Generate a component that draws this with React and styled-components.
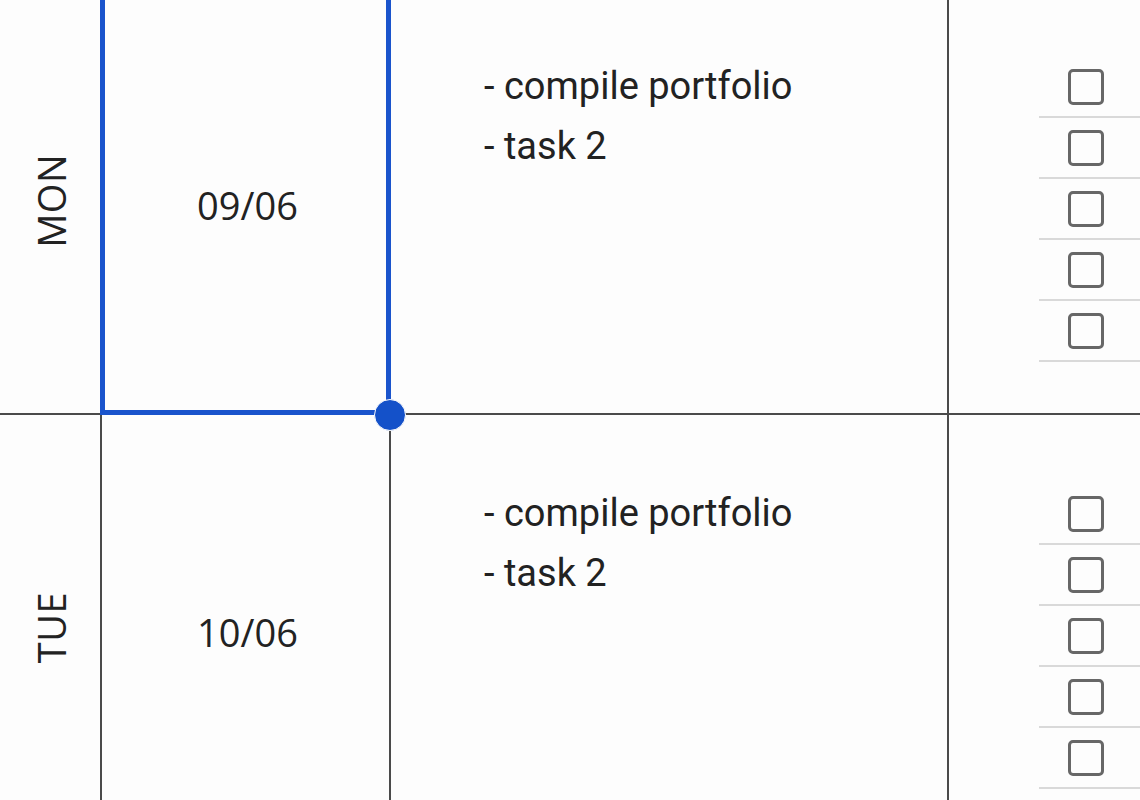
import React from "react";
import styled, { createGlobalStyle } from "styled-components";

const GlobalStyle = createGlobalStyle`
  html, body {
    margin: 0;
    padding: 0;
    background: #fdfdfd;
  }
`;

const Viewport = styled.div`
  width: 1140px;
  height: 800px;
  overflow: hidden;
  background: #fdfdfd;
`;

const Grid = styled.div`
  display: grid;
  grid-template-columns: 102px 289px 558px 260px;
  grid-auto-rows: 427px;
  margin-top: -12px;
  color: #222;
`;

const Cell = styled.div`
  box-sizing: border-box;
  position: relative;
  border-right: 2px solid #4a4a4a;
  border-bottom: 2px solid #4a4a4a;
`;

const DayCell = styled(Cell)`
  display: flex;
  align-items: center;
  justify-content: center;
`;

const DayLabel = styled.span`
  writing-mode: vertical-rl;
  transform: rotate(180deg);
  font-family: "Open Sans", "Liberation Sans", sans-serif;
  font-size: 38px;
  letter-spacing: 0.5px;
  margin-left: 2px;
`;

const DateCell = styled(Cell)`
  display: flex;
  align-items: center;
  justify-content: center;
  padding: 8px 0 0 4px;
  font-family: "Open Sans", "Liberation Sans", sans-serif;
  font-size: 38px;
`;

const Selection = styled.div`
  position: absolute;
  top: -2px;
  left: -2px;
  right: -2px;
  bottom: -2px;
  border: 5px solid #1a54cc;
  pointer-events: none;
`;

const FillHandle = styled.div`
  position: absolute;
  right: -17px;
  bottom: -18px;
  width: 30px;
  height: 30px;
  border-radius: 50%;
  background: #1451c9;
  border: 1px solid #fdfdfd;
  z-index: 2;
`;

const TaskCell = styled(Cell)`
  padding: 68px 0 0 93px;
  font-family: Roboto, "Liberation Sans", sans-serif;
  font-size: 38px;
`;

const TaskLine = styled.div`
  line-height: 60px;
  height: 60px;
`;

const CheckCell = styled(Cell)`
  border-right: none;
  padding: 69px 0 0 90px;
`;

const CheckItem = styled.div`
  height: 59px;
  border-bottom: 2px solid #d9d9d9;
  display: flex;
  align-items: center;
  padding-left: 29px;
`;

const CheckBox = styled.span`
  box-sizing: border-box;
  width: 36px;
  height: 36px;
  border: 3px solid #676767;
  border-radius: 5px;
`;

const days = [
  { day: "MON", date: "09/06", tasks: ["- compile portfolio", "- task 2"], selected: true },
  { day: "TUE", date: "10/06", tasks: ["- compile portfolio", "- task 2"] },
];

const App = () => (
  <>
    <GlobalStyle />
    <Viewport>
      <Grid>
        {days.map((d) => (
          <React.Fragment key={d.day}>
            <DayCell>
              <DayLabel>{d.day}</DayLabel>
            </DayCell>
            <DateCell>
              {d.date}
              {d.selected && (
                <>
                  <Selection />
                  <FillHandle />
                </>
              )}
            </DateCell>
            <TaskCell>
              {d.tasks.map((t) => (
                <TaskLine key={t}>{t}</TaskLine>
              ))}
            </TaskCell>
            <CheckCell>
              {[0, 1, 2, 3, 4].map((i) => (
                <CheckItem key={i}>
                  <CheckBox />
                </CheckItem>
              ))}
            </CheckCell>
          </React.Fragment>
        ))}
      </Grid>
    </Viewport>
  </>
);

export default App;
